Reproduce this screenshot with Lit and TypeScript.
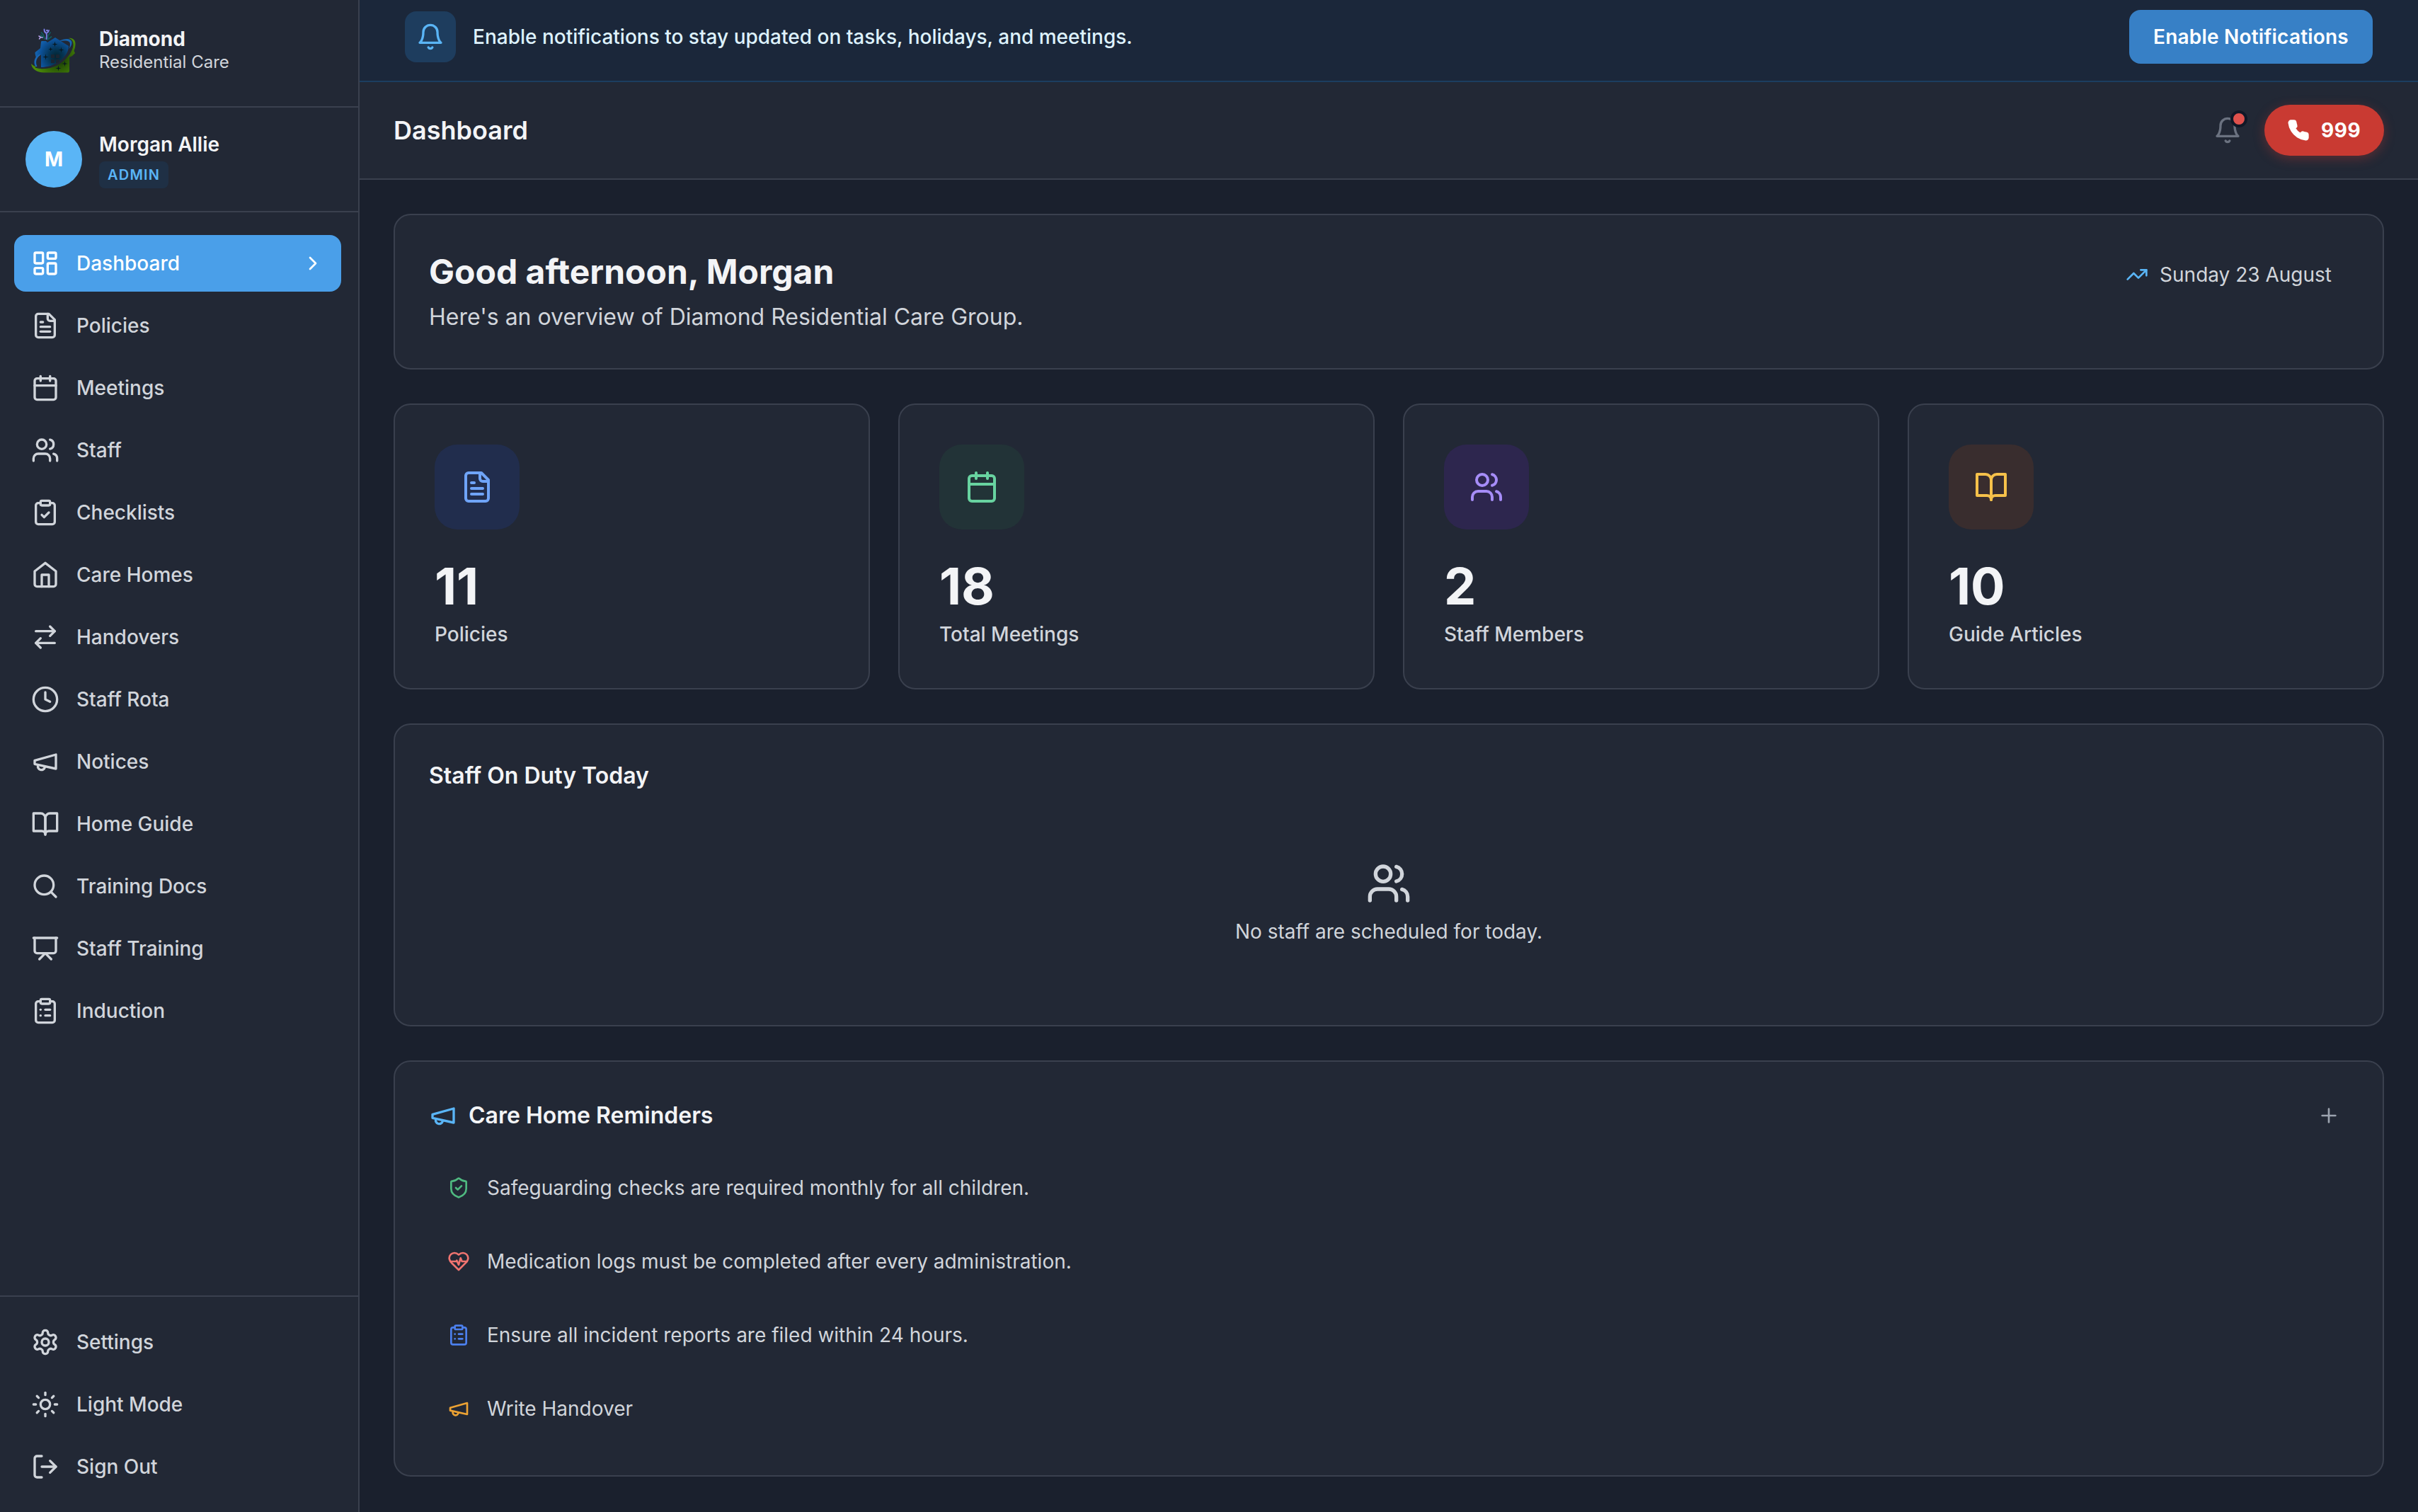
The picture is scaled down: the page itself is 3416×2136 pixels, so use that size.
import { LitElement, html, svg, css } from "lit";
import { customElement, property } from "lit/decorators.js";
import { classMap } from "lit/directives/class-map.js";

// Stroke icons on a 24x24 grid.
const ICONS: Record<string, unknown> = {
  dashboard: svg`<rect width="7" height="9" x="3" y="3" rx="1"/><rect width="7" height="5" x="14" y="3" rx="1"/><rect width="7" height="9" x="14" y="12" rx="1"/><rect width="7" height="5" x="3" y="16" rx="1"/>`,
  file: svg`<path d="M15 2H6a2 2 0 0 0-2 2v16a2 2 0 0 0 2 2h12a2 2 0 0 0 2-2V7Z"/><path d="M14 2v4a2 2 0 0 0 2 2h4"/><path d="M10 9H8"/><path d="M16 13H8"/><path d="M16 17H8"/>`,
  calendar: svg`<path d="M8 2v4"/><path d="M16 2v4"/><rect width="18" height="18" x="3" y="4" rx="2"/><path d="M3 10h18"/>`,
  users: svg`<path d="M16 21v-2a4 4 0 0 0-4-4H6a4 4 0 0 0-4 4v2"/><circle cx="9" cy="7" r="4"/><path d="M22 21v-2a4 4 0 0 0-3-3.87"/><path d="M16 3.13a4 4 0 0 1 0 7.75"/>`,
  clipboardCheck: svg`<rect width="8" height="4" x="8" y="2" rx="1"/><path d="M16 4h2a2 2 0 0 1 2 2v14a2 2 0 0 1-2 2H6a2 2 0 0 1-2-2V6a2 2 0 0 1 2-2h2"/><path d="m9 14 2 2 4-4"/>`,
  home: svg`<path d="m3 9 9-7 9 7v11a2 2 0 0 1-2 2H5a2 2 0 0 1-2-2z"/><polyline points="9 22 9 12 15 12 15 22"/>`,
  swap: svg`<path d="m16 3 4 4-4 4"/><path d="M20 7H4"/><path d="m8 21-4-4 4-4"/><path d="M4 17h16"/>`,
  clock: svg`<circle cx="12" cy="12" r="10"/><polyline points="12 6 12 12 16 14"/>`,
  megaphone: svg`<path d="m3 11 18-5v12L3 14v-3z"/><path d="M11.6 16.8a3 3 0 1 1-5.8-1.6"/>`,
  book: svg`<path d="M2 3h6a4 4 0 0 1 4 4v14a3 3 0 0 0-3-3H2z"/><path d="M22 3h-6a4 4 0 0 0-4 4v14a3 3 0 0 1 3-3h7z"/>`,
  search: svg`<circle cx="11" cy="11" r="8"/><path d="m21 21-4.3-4.3"/>`,
  presentation: svg`<path d="M2 3h20"/><path d="M21 3v11a2 2 0 0 1-2 2H5a2 2 0 0 1-2-2V3"/><path d="m7 21 5-5 5 5"/>`,
  clipboardList: svg`<rect width="8" height="4" x="8" y="2" rx="1"/><path d="M16 4h2a2 2 0 0 1 2 2v14a2 2 0 0 1-2 2H6a2 2 0 0 1-2-2V6a2 2 0 0 1 2-2h2"/><path d="M12 11h4"/><path d="M12 16h4"/><path d="M8 11h.01"/><path d="M8 16h.01"/>`,
  settings: svg`<path d="M12.22 2h-.44a2 2 0 0 0-2 2v.18a2 2 0 0 1-1 1.73l-.43.25a2 2 0 0 1-2 0l-.15-.08a2 2 0 0 0-2.73.73l-.22.38a2 2 0 0 0 .73 2.73l.15.1a2 2 0 0 1 1 1.72v.51a2 2 0 0 1-1 1.74l-.15.09a2 2 0 0 0-.73 2.73l.22.38a2 2 0 0 0 2.73.73l.15-.08a2 2 0 0 1 2 0l.43.25a2 2 0 0 1 1 1.73V20a2 2 0 0 0 2 2h.44a2 2 0 0 0 2-2v-.18a2 2 0 0 1 1-1.73l.43-.25a2 2 0 0 1 2 0l.15.08a2 2 0 0 0 2.73-.73l.22-.39a2 2 0 0 0-.73-2.73l-.15-.08a2 2 0 0 1-1-1.74v-.5a2 2 0 0 1 1-1.74l.15-.09a2 2 0 0 0 .73-2.73l-.22-.38a2 2 0 0 0-2.73-.73l-.15.08a2 2 0 0 1-2 0l-.43-.25a2 2 0 0 1-1-1.73V4a2 2 0 0 0-2-2z"/><circle cx="12" cy="12" r="3"/>`,
  sun: svg`<circle cx="12" cy="12" r="4"/><path d="M12 2v2"/><path d="M12 20v2"/><path d="m4.93 4.93 1.41 1.41"/><path d="m17.66 17.66 1.41 1.41"/><path d="M2 12h2"/><path d="M20 12h2"/><path d="m6.34 17.66-1.41 1.41"/><path d="m19.07 4.93-1.41 1.41"/>`,
  logout: svg`<path d="M9 21H5a2 2 0 0 1-2-2V5a2 2 0 0 1 2-2h4"/><polyline points="16 17 21 12 16 7"/><path d="M21 12H9"/>`,
  chevron: svg`<path d="m9 18 6-6-6-6"/>`,
  bell: svg`<path d="M6 8a6 6 0 0 1 12 0c0 7 3 9 3 9H3s3-2 3-9"/><path d="M10.3 21a1.94 1.94 0 0 0 3.4 0"/>`,
  phone: svg`<path fill="currentColor" d="M22 16.92v3a2 2 0 0 1-2.18 2 19.79 19.79 0 0 1-8.63-3.07 19.5 19.5 0 0 1-6-6 19.79 19.79 0 0 1-3.07-8.67A2 2 0 0 1 4.11 2h3a2 2 0 0 1 2 1.72 12.84 12.84 0 0 0 .7 2.81 2 2 0 0 1-.45 2.11L8.09 9.91a16 16 0 0 0 6 6l1.27-1.27a2 2 0 0 1 2.11-.45 12.84 12.84 0 0 0 2.81.7A2 2 0 0 1 22 16.92z"/>`,
  trend: svg`<polyline points="22 7 13.5 15.5 8.5 10.5 2 17"/><polyline points="16 7 22 7 22 13"/>`,
  plus: svg`<path d="M5 12h14"/><path d="M12 5v14"/>`,
  shield: svg`<path d="M20 13c0 5-3.5 7.5-7.66 8.95a1 1 0 0 1-.67-.01C7.5 20.5 4 18 4 13V6a1 1 0 0 1 1-1c2 0 4.5-1.2 6.24-2.72a1.17 1.17 0 0 1 1.52 0C14.51 3.81 17 5 19 5a1 1 0 0 1 1 1z"/><path d="m9 12 2 2 4-4"/>`,
  heart: svg`<path d="M19 14c1.49-1.46 3-3.21 3-5.5A5.5 5.5 0 0 0 16.5 3c-1.76 0-3 .5-4.5 2-1.5-1.5-2.74-2-4.5-2A5.5 5.5 0 0 0 2 8.5c0 2.3 1.5 4.05 3 5.5l7 7Z"/><path d="M3.22 12H9.5l.5-1 2 4.5 2-7 1.5 3.5h5.27"/>`,
};

@customElement("ui-icon")
class UiIcon extends LitElement {
  @property() name = "";
  @property({ type: Number }) size = 40;

  static styles = css`
    :host { display: block; flex: none; line-height: 0; }
    .glyph { display: block; fill: none; stroke: currentColor; stroke-width: 2; stroke-linecap: round; stroke-linejoin: round; }
  `;

  render() {
    return html`<svg class="glyph" width=${this.size} height=${this.size} viewBox="0 0 24 24">${ICONS[this.name]}</svg>`;
  }
}

@customElement("brand-logo")
class BrandLogo extends LitElement {
  static styles = css`
    :host { display: block; flex: none; line-height: 0; }
    .art { display: block; width: 80px; height: 80px; }
  `;

  render() {
    const star = (x: number, y: number, r: number) => svg`<path fill="#07171f" d=${`M${x} ${y - r}L${x + 0.7} ${y - 0.7}L${x + r} ${y}L${x + 0.7} ${y + 0.7}L${x} ${y + r}L${x - 0.7} ${y + 0.7}L${x - r} ${y}L${x - 0.7} ${y - 0.7}Z`}/>`;
    return html`<svg class="art" viewBox="36 32 80 80">
      <defs>
        <radialGradient id="roof" gradientUnits="userSpaceOnUse" cx="80" cy="80" r="30">
          <stop offset="0" stop-color="#03242e"/><stop offset=".35" stop-color="#053555"/><stop offset=".75" stop-color="#0c4f94"/><stop offset="1" stop-color="#1463b0"/>
        </radialGradient>
        <radialGradient id="grass" gradientUnits="userSpaceOnUse" cx="82" cy="82" r="34">
          <stop offset="0" stop-color="#10300a"/><stop offset=".45" stop-color="#2c5a06"/><stop offset="1" stop-color="#4c8c08"/>
        </radialGradient>
      </defs>
      <path fill="url(#roof)" d="M58 59.500c0-1 .5-1.500 1.500-1.500H65l2 2 11-7 19 12c0 9-6 17-15 23-8 5-16 7-24 7V77c-3 1-5 3-6.500 6-1-3-2-6-2-9l7.500-6z"/>
      <path fill="#1b67b5" d="M57 76.500C49 79 46 88 50.500 94.500L52.500 93.500C49.500 88 51.500 81 57.500 77.500z"/>
      <path fill="#1763ad" d="M83.500 58C92 53.500 101 54 101.500 60c.2 3-1.500 6-4 9 1.500-4 2.500-8 0-10-3-2-8-1.500-14-1z"/>
      <path fill="url(#grass)" d="M97 54c6-1 9.500 3 9.500 8 0 5-1.500 8-2 10l1.500 3-4 4-4 2v20l-1.500 1.500H62C52 102 45 98 44 90c6 6 17 8 27 6C87 92 102 77 103.500 64c.5-5-2-9-6.500-10z"/>
      <g fill="#1b2532"><rect x="72" y="77" width="5" height="5" rx=".6"/><rect x="79" y="77" width="5" height="5" rx=".6"/><rect x="72" y="84" width="5" height="5" rx=".6"/><rect x="79" y="84" width="5" height="5" rx=".6"/></g>
      <path fill="none" stroke="#222835" stroke-width="1.800" d="M50 95C60 97.500 70 96 79 91C90 85 99 76 102 66"/>
      ${star(77.5, 62.5, 4)}${star(71.5, 69.5, 3)}${star(86.5, 70.5, 4)}${star(64.5, 80.5, 4.5)}${star(91.5, 90, 4)}${star(82.5, 96.5, 4)}
      <g fill="none" stroke-linecap="round">
        <path stroke="#125a5e" stroke-width="1.800" d="M58.500 46l2.500 3 2 6M57.500 49.500l3 3M71 46l-3 4-1 6M72.500 52l-4 3"/>
        <path stroke="#7d7fe6" stroke-width="1.900" d="M62.500 41.500c0 3 1 4.500 3 5.500 1 3 0 6 0 8M65.500 47c2-1 3-2 3.500-4"/>
        <path stroke="#b9a4ef" stroke-width="1.500" d="M55 51l2.500 1.500L55.500 55M57.500 52.500L60 53"/>
      </g>
      <circle cx="66.500" cy="43" r="1.300" fill="#8d8ff0"/>
    </svg>`;
  }
}

@customElement("app-root")
class AppRoot extends LitElement {
  private nav = [
    ["dashboard", "Dashboard"], ["file", "Policies"], ["calendar", "Meetings"], ["users", "Staff"],
    ["clipboardCheck", "Checklists"], ["home", "Care Homes"], ["swap", "Handovers"], ["clock", "Staff Rota"],
    ["megaphone", "Notices"], ["book", "Home Guide"], ["search", "Training Docs"], ["presentation", "Staff Training"],
    ["clipboardList", "Induction"],
  ];
  private footer = [["settings", "Settings"], ["sun", "Light Mode"], ["logout", "Sign Out"]];
  private stats = [
    { icon: "file", value: "11", label: "Policies", tone: "blue" },
    { icon: "calendar", value: "18", label: "Total Meetings", tone: "green" },
    { icon: "users", value: "2", label: "Staff Members", tone: "purple" },
    { icon: "book", value: "10", label: "Guide Articles", tone: "amber" },
  ];
  private reminders = [
    { icon: "shield", text: "Safeguarding checks are required monthly for all children.", tone: "r-green" },
    { icon: "heart", text: "Medication logs must be completed after every administration.", tone: "r-red" },
    { icon: "clipboardList", text: "Ensure all incident reports are filed within 24 hours.", tone: "r-blue" },
    { icon: "megaphone", text: "Write Handover", tone: "r-amber" },
  ];

  static styles = css`
    :host {
      display: grid; grid-template-columns: 508px 1fr; height: 2136px; overflow: hidden;
      background: #1a202d; color: #f3f4f6; font-family: Inter, "Liberation Sans", sans-serif;
      font-size: 28px; line-height: 42px; box-sizing: border-box;
    }
    * { box-sizing: border-box; }
    .sidebar { display: flex; flex-direction: column; background: #222835; border-right: 2px solid #3a404e; }
    .brand { display: flex; gap: 24px; height: 152px; padding: 32px 36px; border-bottom: 2px solid #3a404e; }
    .brand-text { display: flex; flex-direction: column; padding-top: 3px; }
    .brand-name { font-weight: 700; line-height: 40px; }
    .brand-sub { margin-top: -1px; font-size: 24px; line-height: 28px; color: #d1d5db; }
    .user { display: flex; gap: 24px; height: 148px; padding: 33px 36px; border-bottom: 2px solid #3a404e; }
    .avatar { display: grid; place-items: center; width: 80px; height: 80px; border-radius: 50%; background: #5ab5f6; color: #fff; font-weight: 700; }
    .user-text { display: flex; flex-direction: column; align-items: flex-start; }
    .user-name { font-weight: 600; line-height: 38px; }
    .role { margin-top: 5px; height: 38px; padding: 0 12px; border-radius: 8px; background: #1f3045; color: #5ab5f6; font-size: 20px; font-weight: 600; letter-spacing: 1.2px; line-height: 38px; }
    .nav { flex: 1; display: flex; flex-direction: column; gap: 8px; padding: 32px 24px 0 20px; }
    .nav-foot { display: flex; flex-direction: column; gap: 8px; padding: 24px 24px 24px 20px; border-top: 2px solid #3a404e; }
    .item { display: flex; align-items: center; gap: 24px; height: 80px; padding: 0 24px; border-radius: 16px; color: #d1d5db; font-weight: 500; }
    .item .label { flex: 1; }
    .item.active { background: #4a9fe9; color: #fff; }
    .main { display: flex; flex-direction: column; min-width: 0; }
    .banner { display: flex; align-items: center; gap: 24px; height: 116px; padding: 0 64px 10px; border-bottom: 2px solid #1c3e60; background: #1b273a; }
    .banner-icon { display: grid; place-items: center; width: 72px; height: 72px; border-radius: 16px; background: #1e3d5e; color: #5ab5f6; }
    .banner-text { flex: 1; color: #def2fd; font-weight: 500; }
    .enable { display: grid; place-items: center; width: 344px; height: 76px; border-radius: 16px; background: #3780c6; color: #fff; font-weight: 600; letter-spacing: .2px; }
    .topbar { display: flex; align-items: center; height: 138px; padding: 0 48px; background: #222835; border-bottom: 2px solid #3a404e; }
    .page-title { flex: 1; font-size: 36px; font-weight: 600; line-height: 48px; }
    .bell { position: relative; display: grid; place-items: center; width: 72px; height: 72px; color: #6b7280; margin-right: 16px; }
    .dot { position: absolute; top: 8px; right: 8px; width: 24px; height: 24px; border: 4px solid #111827; border-radius: 50%; background: #df514c; }
    .emergency { display: flex; align-items: center; gap: 16px; width: 169px; height: 72px; padding-left: 32px; border-radius: 36px; background: #c93a32; color: #fff; font-weight: 700; letter-spacing: .6px; box-shadow: 0 4px 16px rgba(201, 58, 50, .35); }
    .content { display: flex; flex-direction: column; gap: 48px; padding: 48px; }
    .card { border: 2px solid #3a404e; border-radius: 24px; background: #222835; }
    .welcome { display: flex; justify-content: space-between; height: 220px; padding: 48px; }
    .greeting { font-size: 48px; font-weight: 700; line-height: 64px; margin-bottom: 8px; }
    .overview { font-size: 32px; line-height: 48px; color: #d1d5db; }
    .date { display: flex; align-items: center; gap: 16px; height: 72px; padding: 0 24px; color: #d1d5db; }
    .date-icon { color: #5ab5f6; }
    .stats { display: grid; grid-template-columns: repeat(4, 1fr); gap: 40px; }
    .stat { height: 404px; padding: 56px; }
    .stat-icon { display: grid; place-items: center; width: 120px; height: 120px; margin-bottom: 40px; border-radius: 32px; }
    .blue { background: #212d4d; color: #6fa4f8; }
    .green { background: #223337; color: #68d3a0; }
    .purple { background: #2d264e; color: #a68df8; }
    .amber { background: #392d2e; color: #f6c14a; }
    .stat-value { margin-bottom: 7px; font-size: 72px; font-weight: 700; line-height: 80px; }
    .stat-label { color: #d1d5db; font-weight: 500; }
    .duty { height: 428px; padding: 48px; }
    .section-title { font-size: 32px; font-weight: 600; line-height: 48px; }
    .empty { display: flex; flex-direction: column; align-items: center; gap: 15px; padding-top: 96px; color: #d1d5db; }
    .reminders { height: 588px; padding: 48px; }
    .reminders-head { display: flex; align-items: center; gap: 16px; height: 56px; margin-bottom: 28px; }
    .reminders-head .section-title { flex: 1; }
    .accent { color: #5ab5f6; }
    .add { display: grid; place-items: center; width: 56px; height: 56px; color: #9ca3af; }
    .rows { display: flex; flex-direction: column; gap: 12px; }
    .row { display: flex; align-items: center; gap: 24px; height: 92px; padding: 0 26px; color: #d1d5db; }
    .r-green { color: #4fb980; }
    .r-red { color: #f07470; }
    .r-blue { color: #4c80ee; }
    .r-amber { color: #eca233; }
  `;

  private renderItem([icon, label]: string[], active = false) {
    return html`<div class=${classMap({ item: true, active })}>
      <ui-icon name=${icon}></ui-icon><span class="label">${label}</span>
      ${active ? html`<ui-icon name="chevron" size="32"></ui-icon>` : ""}
    </div>`;
  }

  render() {
    return html`
      <aside class="sidebar">
        <div class="brand">
          <brand-logo></brand-logo>
          <div class="brand-text"><span class="brand-name">Diamond</span><span class="brand-sub">Residential Care</span></div>
        </div>
        <div class="user">
          <div class="avatar">M</div>
          <div class="user-text"><span class="user-name">Morgan Allie</span><span class="role">ADMIN</span></div>
        </div>
        <nav class="nav">${this.nav.map((n, i) => this.renderItem(n, i === 0))}</nav>
        <div class="nav-foot">${this.footer.map((n) => this.renderItem(n))}</div>
      </aside>
      <main class="main">
        <div class="banner">
          <div class="banner-icon"><ui-icon name="bell"></ui-icon></div>
          <span class="banner-text">Enable notifications to stay updated on tasks, holidays, and meetings.</span>
          <div class="enable">Enable Notifications</div>
        </div>
        <header class="topbar">
          <span class="page-title">Dashboard</span>
          <div class="bell"><ui-icon name="bell"></ui-icon><span class="dot"></span></div>
          <div class="emergency"><ui-icon name="phone" size="32"></ui-icon><span>999</span></div>
        </header>
        <div class="content">
          <section class="card welcome">
            <div>
              <div class="greeting">Good afternoon, Morgan</div>
              <div class="overview">Here's an overview of Diamond Residential Care Group.</div>
            </div>
            <div class="date"><ui-icon class="date-icon" name="trend" size="32"></ui-icon><span>Sunday 23 August</span></div>
          </section>
          <section class="stats">
            ${this.stats.map((s) => html`<div class="card stat">
              <div class="stat-icon ${s.tone}"><ui-icon name=${s.icon} size="48"></ui-icon></div>
              <div class="stat-value">${s.value}</div>
              <div class="stat-label">${s.label}</div>
            </div>`)}
          </section>
          <section class="card duty">
            <div class="section-title">Staff On Duty Today</div>
            <div class="empty"><ui-icon name="users" size="64"></ui-icon><span>No staff are scheduled for today.</span></div>
          </section>
          <section class="card reminders">
            <div class="reminders-head">
              <ui-icon class="accent" name="megaphone"></ui-icon>
              <span class="section-title">Care Home Reminders</span>
              <div class="add"><ui-icon name="plus" size="32"></ui-icon></div>
            </div>
            <div class="rows">
              ${this.reminders.map((r) => html`<div class="row"><ui-icon class=${r.tone} name=${r.icon} size="32"></ui-icon><span>${r.text}</span></div>`)}
            </div>
          </section>
        </div>
      </main>`;
  }
}
